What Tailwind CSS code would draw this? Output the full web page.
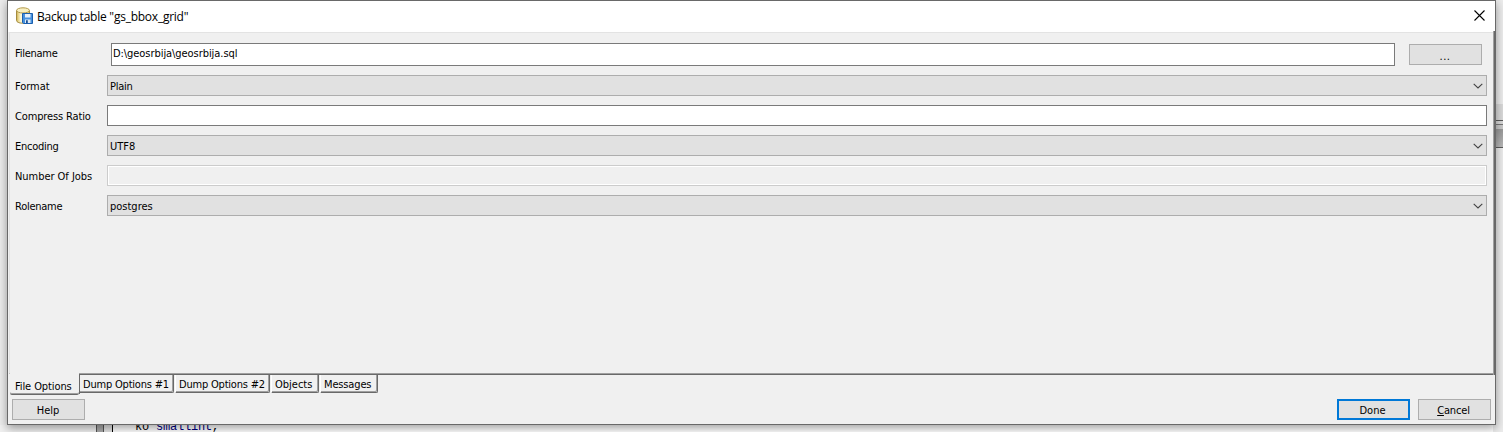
<!DOCTYPE html>
<html lang="en">
<head>
<meta charset="utf-8">
<title>Backup table</title>
<script src="https://cdn.jsdelivr.net/npm/@tailwindcss/browser@4"></script>
</head>
<body class="relative h-[432px] w-[1503px] overflow-hidden bg-[#ececec] font-['DejaVu_Sans_Condensed','DejaVu_Sans',sans-serif] text-[11px] leading-[13px] text-black [font-stretch:condensed]">
  <!-- editor behind the dialog -->
  <div class="absolute inset-x-0 top-[425px] h-[7px] bg-white">
    <div class="absolute left-0 top-0 h-full w-[96px] bg-[#f0f0f0]"></div>
    <div class="absolute left-[96px] top-0 h-full w-[8px] border-x border-[#555] bg-[#aaa]"></div>
    <div class="absolute left-[104px] top-0 h-full w-[9px] border-r border-black bg-[#e4e4e4]"></div>
    <div class="absolute -top-[3px] left-[135px] whitespace-pre font-['Liberation_Mono',monospace] text-[12px] leading-[10px] tracking-[-0.2px]">ko <span class="text-[#000080]">smallint</span>,</div>
  </div>
  <div class="absolute right-0 top-0 h-[432px] w-[10px] bg-[#ececec]">
    <div class="h-[104px]"></div>
    <div class="h-4 bg-[#d9d9d9]"></div>
    <div class="h-px bg-[#5a5a5a]"></div>
    <div class="h-[3px] bg-[#d8d8d8]"></div>
    <div class="h-px bg-[#777]"></div>
    <div class="h-1 bg-[#c9c9c9]"></div>
    <div class="h-[18px] bg-linear-to-b from-[#999] to-[#b8b8b8]"></div>
    <div class="h-px bg-[#5a5a5a]"></div>
  </div>

  <!-- dialog window -->
  <div class="absolute left-[7px] top-0 flex h-[425px] w-[1489px] flex-col border border-[#696969] bg-[#f0f0f0] shadow-[0_3px_9px_rgba(0,0,0,0.38)]">
    <header class="flex h-[31px] shrink-0 items-center bg-white pl-2">
      <svg class="-mt-[2px] h-[18px] w-[17px] shrink-0" viewBox="0 0 17 18">
        <defs><linearGradient id="cyl"><stop offset="0" stop-color="#d8bd58"/><stop offset=".35" stop-color="#fffbe0"/><stop offset="1" stop-color="#e8d074"/></linearGradient></defs>
        <path d="M.6 3.4V13.6C.6 15 3 16.2 7 16.2S13.4 15 13.4 13.6V3.4Z" fill="url(#cyl)" stroke="#9c8233"/>
        <ellipse cx="7" cy="3.4" rx="6.4" ry="2.6" fill="#f8efc0" stroke="#b29a4c"/>
        <path d="M6.5 6.5H16.5V16.5H7.5L6.5 15.5Z" fill="#4791df" stroke="#1b5fae"/>
        <path d="M9 7H14.5V10.5H9Z" fill="#e5f0fb"/>
        <path d="M9 12.5H14.5V16H9Z" fill="#dfeaf5"/>
        <path d="M10 13.2H11.8V16H10Z" fill="#174f96"/>
      </svg>
      <h1 class="mt-px ml-[4px] whitespace-pre font-['Open_Sans','Noto_Sans',sans-serif] text-[12px] leading-4 tracking-[-0.24px] [font-stretch:normal]">Backup table "gs_bbox_grid"</h1>
      <svg class="ml-auto mr-[10px] -mt-[2px] h-[11px] w-[11px]" viewBox="0 0 11 11"><path d="M.5.5 10.5 10.5M10.5.5.5 10.5" stroke="#000" stroke-width="1.1"/></svg>
    </header>

    <main class="relative ml-px flex h-[342px] shrink-0 flex-col border-b border-l border-b-[#a0a0a0] border-l-[#e3e3e3]">
      <div class="h-px shrink-0 bg-[#e3e3e3]"></div>
      <div class="absolute -right-px top-[-1px] h-[344px] w-[3px] border-l border-[#a0a0a0] bg-[#696969]"></div>
      <div class="flex h-[42px] shrink-0 pl-[5px] pt-[10px]">
        <label class="mt-[4px] w-[96px] tracking-[-0.25px]">Filename</label>
        <div class="h-[23px] w-[1284px] border border-[#7a7a7a] bg-white pl-px pt-[3px]"><span class="tracking-[-0.06px]">D:\geosrbija\geosrbija.sql</span></div>
        <button class="ml-[14px] mt-px h-[21px] w-[73px] border border-[#adadad] bg-[#e1e1e1] pt-[3px] pr-px text-center tracking-[0.5px]">...</button>
      </div>
      <div class="flex h-[30px] shrink-0 pl-[5px]">
        <label class="mt-[5px] w-[92px] tracking-[-0.05px]">Format</label>
        <div class="flex h-[21px] w-[1380px] items-center border border-[#adadad] bg-[#e1e1e1] pl-[2px]"><span class="mt-px tracking-[-0.25px]">Plain</span><svg class="ml-auto mr-[3px] h-[6px] w-[10px]" viewBox="0 0 10 6"><path d="M.7.8 5 5 9.3.8" fill="none" stroke="#444" stroke-width="1.1"/></svg></div>
      </div>
      <div class="flex h-[30px] shrink-0 pl-[5px]">
        <label class="mt-[5px] w-[92px] whitespace-nowrap tracking-[-0.14px]">Compress Ratio</label>
        <div class="h-[21px] w-[1380px] border border-[#7a7a7a] bg-white"></div>
      </div>
      <div class="flex h-[30px] shrink-0 pl-[5px]">
        <label class="mt-[5px] w-[92px] tracking-[-0.25px]">Encoding</label>
        <div class="flex h-[21px] w-[1380px] items-center border border-[#adadad] bg-[#e1e1e1] pl-[2px]"><span class="mt-px">UTF8</span><svg class="ml-auto mr-[3px] h-[6px] w-[10px]" viewBox="0 0 10 6"><path d="M.7.8 5 5 9.3.8" fill="none" stroke="#444" stroke-width="1.1"/></svg></div>
      </div>
      <div class="flex h-[30px] shrink-0 pl-[5px]">
        <label class="mt-[5px] w-[92px] whitespace-nowrap tracking-[-0.04px]">Number Of Jobs</label>
        <div class="h-[21px] w-[1380px] border border-[#cccccc] bg-[#f0f0f0] shadow-[inset_0_0_0_1px_#fff]"></div>
      </div>
      <div class="flex h-[30px] shrink-0 pl-[5px]">
        <label class="mt-[5px] w-[92px] tracking-[-0.25px]">Rolename</label>
        <div class="flex h-[21px] w-[1380px] items-center border border-[#adadad] bg-[#e1e1e1] pl-[2px]"><span class="mt-px">postgres</span><svg class="ml-auto mr-[3px] h-[6px] w-[10px]" viewBox="0 0 10 6"><path d="M.7.8 5 5 9.3.8" fill="none" stroke="#444" stroke-width="1.1"/></svg></div>
      </div>
    </main>

    <nav class="ml-[2px] flex h-[20px] shrink-0 items-start whitespace-nowrap">
      <div class="z-10 -mt-px h-[22px] w-[69px] rounded-b-[2px] border-b border-[#696969] bg-[#f0f0f0] pl-[5px] pt-[7px] shadow-[inset_0_-1px_0_#a0a0a0]"><span class="tracking-[-0.1px]">File Options</span></div>
      <div class="flex h-[20px] flex-1 gap-px border-l border-t border-[#696969]">
        <div class="h-[18px] w-[94px] rounded-br-[2px] border-b border-r border-[#696969] pl-[3px] pt-[3px] shadow-[inset_-1px_-1px_0_#a0a0a0]"><span class="tracking-[-0.2px]">Dump Options #1</span></div>
        <div class="h-[18px] w-[95px] rounded-br-[2px] border-b border-l border-r border-[#696969] border-l-white pl-[3px] pt-[3px] shadow-[inset_-1px_-1px_0_#a0a0a0]"><span class="tracking-[-0.2px]">Dump Options #2</span></div>
        <div class="h-[18px] w-[48px] rounded-br-[2px] border-b border-l border-r border-[#696969] border-l-white pl-[3px] pt-[3px] shadow-[inset_-1px_-1px_0_#a0a0a0]"><span>Objects</span></div>
        <div class="h-[18px] w-[58px] rounded-br-[2px] border-b border-l border-r border-[#696969] border-l-white pl-[3px] pt-[3px] shadow-[inset_-1px_-1px_0_#a0a0a0]"><span class="tracking-[-0.15px]">Messages</span></div>
      </div>
    </nav>

    <footer class="flex pl-1 pr-1 pt-[5px]">
      <button class="h-[21px] w-[73px] border border-[#adadad] bg-[#e1e1e1] pr-px pt-px">Help</button>
      <button class="ml-auto h-[21px] w-[73px] border-2 border-[#0078d7] bg-[#e1e1e1] pr-[2px] pt-px">Done</button>
      <button class="ml-2 h-[21px] w-[73px] border border-[#adadad] bg-[#e1e1e1] pr-[2px] pt-px tracking-[-0.15px]"><span class="underline">C</span>ancel</button>
    </footer>
  </div>
</body>
</html>
